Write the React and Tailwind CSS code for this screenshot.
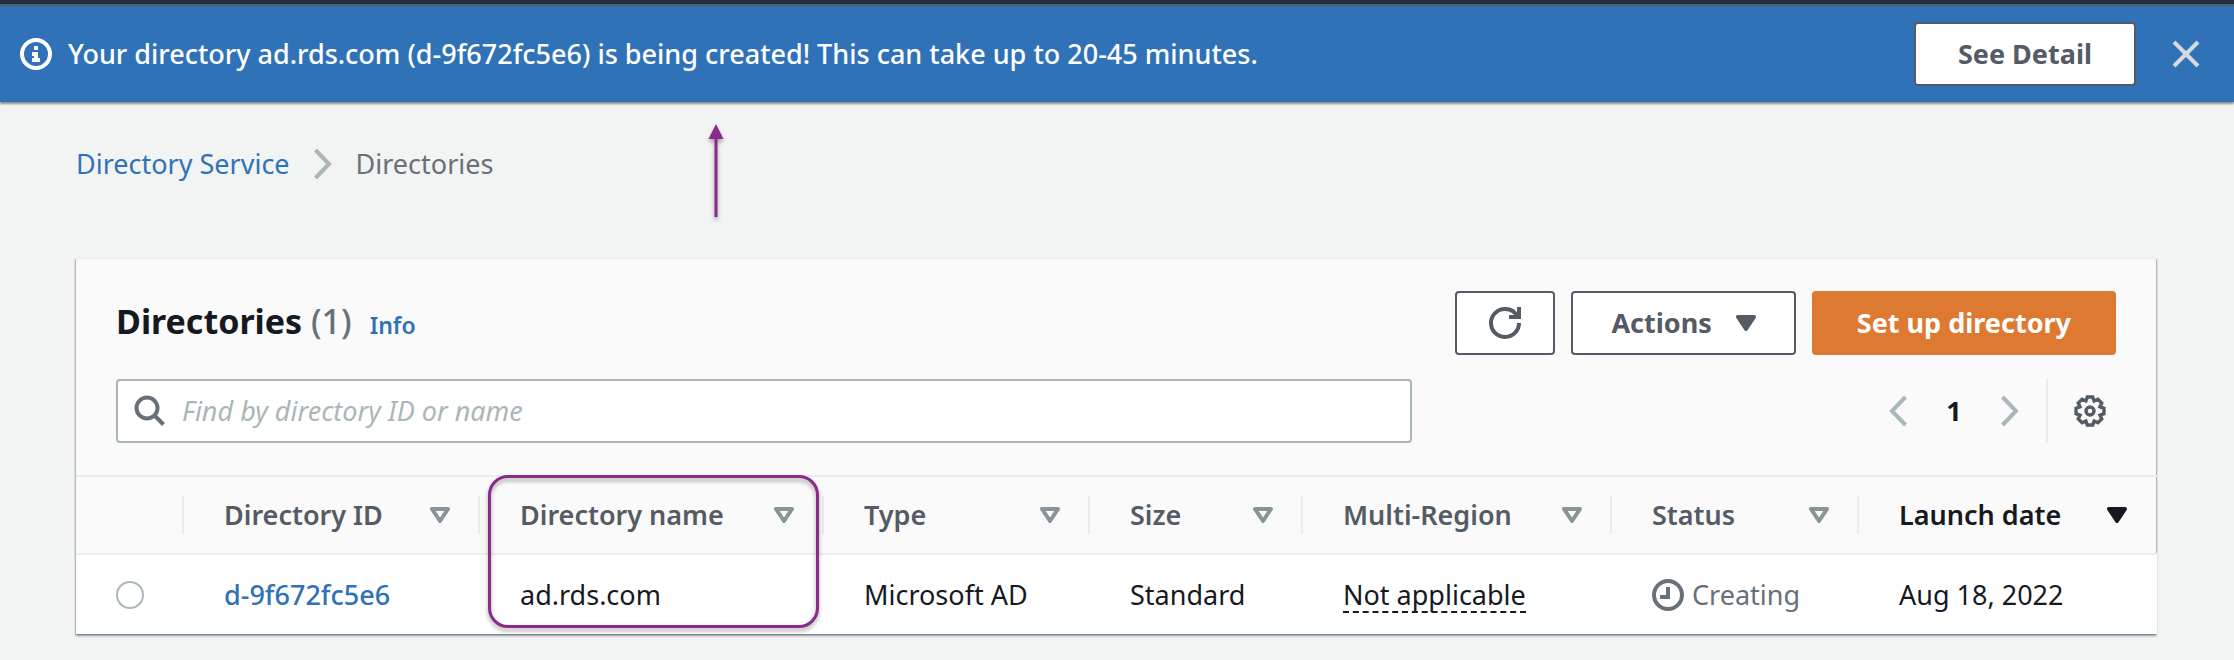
import React from "react";

const columns = [
  { key: "id", label: "Directory ID", width: "w-[296px]" },
  { key: "name", label: "Directory name", width: "w-[344px]", marked: true },
  { key: "type", label: "Type", width: "w-[266px]" },
  { key: "size", label: "Size", width: "w-[213px]" },
  { key: "region", label: "Multi-Region", width: "w-[309px]" },
  { key: "status", label: "Status", width: "w-[247px]" },
  { key: "date", label: "Launch date", width: "w-[298px]", sorted: true },
];

function InfoIcon() {
  return (
    <svg viewBox="0 0 16 16" className="size-8 shrink-0" fill="currentColor" aria-hidden="true">
      <circle cx="8" cy="8" r="7" fill="none" stroke="currentColor" strokeWidth="2" />
      <path d="M7 4H9V6H7ZM6 7H9V10H10V12H6V10H7V9H6Z" />
    </svg>
  );
}

function CloseIcon() {
  return (
    <svg viewBox="0 0 32 32" className="size-8" fill="none" stroke="currentColor" strokeWidth="4" aria-hidden="true">
      <path d="M4 4 28 28M28 4 4 28" />
    </svg>
  );
}

function Chevron({ left = false }) {
  return (
    <svg viewBox="0 0 20 32" className="h-8 w-5 shrink-0" fill="none" stroke="currentColor" strokeWidth="4" aria-hidden="true">
      <path d={left ? "M17.5 2 4 16 17.5 30" : "M2.5 2 16 16 2.5 30"} />
    </svg>
  );
}

function RefreshIcon() {
  return (
    <svg viewBox="0 0 16 16" className="size-8" fill="none" stroke="currentColor" strokeWidth="2" aria-hidden="true">
      <path d="M10 5h5V0" />
      <path d="M15 8a6.957 6.957 0 0 1-7 7 6.957 6.957 0 0 1-7-7 6.957 6.957 0 0 1 7-7 6.870 6.870 0 0 1 6.300 4" />
    </svg>
  );
}

function SearchIcon() {
  return (
    <svg viewBox="0 0 32 32" className="size-8 shrink-0 text-[#687078]" fill="none" stroke="currentColor" strokeWidth="4" aria-hidden="true">
      <circle cx="13" cy="13" r="10.5" />
      <path d="M20.500 20.500 29.500 29.500" />
    </svg>
  );
}

// Eight teeth: two points on the rim of each, and one in the valley after it.
const gearPoints = Array.from({ length: 8 }, (_, i) =>
  [
    [-11, 14.2],
    [11, 14.2],
    [22.5, 10.8],
  ].map(([offset, r]) => {
    const a = ((i * 45 + offset) * Math.PI) / 180;
    return `${(16 + r * Math.cos(a)).toFixed(2)},${(16 + r * Math.sin(a)).toFixed(2)}`;
  }).join(" ")
).join(" ");

function GearIcon() {
  return (
    <svg viewBox="0 0 32 32" className="size-8" fill="none" stroke="currentColor" strokeWidth="3.4" aria-hidden="true">
      <polygon points={gearPoints} />
      <circle cx="16" cy="16" r="4" />
    </svg>
  );
}

function ClockIcon() {
  return (
    <svg viewBox="0 0 16 16" className="size-8 shrink-0" fill="none" stroke="currentColor" strokeWidth="2" aria-hidden="true">
      <circle cx="8" cy="8" r="7" />
      <path d="M8 4v5H4" />
    </svg>
  );
}

function Caret({ filled = false }) {
  return (
    <svg viewBox="0 0 20 16" className="h-4 w-5 shrink-0" fill={filled ? "currentColor" : "none"} stroke="currentColor" strokeWidth="4" strokeLinejoin="round" aria-hidden="true">
      <path d="M2 2H18L10 14Z" />
    </svg>
  );
}

export default function App() {
  return (
    <div className="min-h-screen bg-[#f2f3f3] font-['Noto_Sans','Open_Sans',sans-serif] text-[27px] leading-10 text-[#16191f]">
      <header className="border-t-4 border-[#232f3e]">
        <div className="flex items-center gap-4 border-t-2 border-[#545b64] bg-[#3072b7] py-4 pr-8 pl-5 text-white shadow-[0_2px_2px_#545b64aa]">
          <InfoIcon />
          <p className="grow font-medium">Your directory ad.rds.com (d-9f672fc5e6) is being created! This can take up to 20-45 minutes.</p>
          <button type="button" className="h-16 rounded border-2 border-[#545b64] bg-white px-[42px] font-bold text-[#545b64]">See Detail</button>
          <button type="button" aria-label="Dismiss" className="ml-[18px] text-[#d5dbdb]">
            <CloseIcon />
          </button>
        </div>
      </header>

      <nav aria-label="Breadcrumb" className="relative px-19 pt-[42px]">
        <ol className="flex items-center gap-[23px]">
          <li><a href="#service" className="text-[#3072b7]">Directory Service</a></li>
          <li className="text-[#aab7b8]"><Chevron /></li>
          <li className="text-[#687078]">Directories</li>
        </ol>
        <svg viewBox="0 0 24 104" className="absolute top-5 left-[704px] h-26 w-6 drop-shadow-[0_3px_2px_#00000055]" aria-hidden="true">
          <path d="M12 2 19.500 17H4.500Z" fill="#8a2a8c" />
          <path d="M12 16V95" stroke="#8a2a8c" strokeWidth="3" />
        </svg>
      </nav>

      <main className="pt-[74px] pr-[78px] pb-6 pl-19">
        <section className="border-t border-[#eaeded] bg-[#fafafa] shadow-[0_2px_2px_#5f6b7a99,1px_1px_1px_#5f6b7a55,-1px_1px_1px_#5f6b7a55]">
          <div className="px-10 pt-8 pb-8">
            <div className="flex items-center justify-between">
              <div className="flex items-baseline gap-[18px]">
                <h1 className="text-[34px] font-bold">
                  Directories <span className="font-medium text-[#687078]">(1)</span>
                </h1>
                <a href="#info" className="text-[23px] font-semibold text-[#3072b7]">Info</a>
              </div>
              <div className="flex gap-4 font-bold text-[#545b64]">
                <button type="button" aria-label="Refresh" className="flex h-16 items-center rounded border-2 border-[#545b64] bg-white px-8">
                  <RefreshIcon />
                </button>
                <button type="button" className="flex h-16 items-center gap-6 rounded border-2 border-[#545b64] bg-white px-[38px]">
                  Actions
                  <Caret filled />
                </button>
                <button type="button" className="h-16 rounded bg-[#de7932] px-[45px] text-white">Set up directory</button>
              </div>
            </div>
            <div className="mt-6 flex items-center justify-between">
              <label className="flex h-16 max-w-[1296px] grow items-center gap-4 rounded border-2 border-[#aab7b8] bg-white px-4">
                <SearchIcon />
                <input type="search" aria-label="Find directories" placeholder="Find by directory ID or name" className="w-full bg-transparent outline-none placeholder:text-[#aab7b8] placeholder:italic" />
              </label>
              <div className="flex h-16 items-center text-[#aab7b8]">
                <button type="button" aria-label="Previous page"><Chevron left /></button>
                <span className="w-[92px] text-center font-bold text-[#16191f]">1</span>
                <button type="button" aria-label="Next page"><Chevron /></button>
                <span className="mx-[26px] h-full w-0.5 bg-[#eaeded]" />
                <button type="button" aria-label="Preferences" className="mr-[10px] text-[#545b64]"><GearIcon /></button>
              </div>
            </div>
          </div>

          <table className="w-full table-fixed border-collapse border-t-2 border-[#eaeded] text-left">
            <thead>
              <tr className="border-b-2 border-[#eaeded]">
                <td className="w-[108px] p-0"><div className="h-[38px] border-r-2 border-[#eaeded]" /></td>
                {columns.map((c) => (
                  <th key={c.key} scope="col" className={`${c.width} relative h-[78px] p-0 font-semibold ${c.sorted ? "text-[#16191f]" : "text-[#545b64]"}`}>
                    <div className={`flex h-[38px] items-center justify-between pl-10 ${c.sorted ? "pr-[30px]" : "border-r-2 border-[#eaeded] pr-7"}`}>
                      {c.label}
                      <button type="button" aria-label={`Sort by ${c.label}`} className={c.sorted ? "" : "text-[#879596]"}>
                        <Caret filled={c.sorted} />
                      </button>
                    </div>
                    {c.marked && (
                      <span className="pointer-events-none absolute -top-0.5 right-[5px] left-2 h-[153px] rounded-[20px] border-3 border-[#8a2a8c] drop-shadow-[0_3px_2px_#00000055]" />
                    )}
                  </th>
                ))}
              </tr>
            </thead>
            <tbody className="bg-white">
              <tr>
                <td className="h-20 p-0 pl-10">
                  <input type="radio" name="directory" aria-label="Select ad.rds.com" className="block size-7 appearance-none rounded-full border-2 border-[#aab7b8] bg-white" />
                </td>
                <td className="p-0 pl-10"><a href="#directory" className="font-medium text-[#3072b7]">d-9f672fc5e6</a></td>
                <td className="p-0 pl-10">ad.rds.com</td>
                <td className="p-0 pl-10">Microsoft AD</td>
                <td className="p-0 pl-10">Standard</td>
                <td className="p-0 pl-10"><span className="inline-block border-b-2 border-dashed border-[#16191f] leading-8">Not applicable</span></td>
                <td className="p-0 pl-10">
                  <span className="flex items-center gap-2 text-[#687078]"><ClockIcon />Creating</span>
                </td>
                <td className="p-0 pl-10">Aug 18, 2022</td>
              </tr>
            </tbody>
          </table>
        </section>
      </main>
    </div>
  );
}
